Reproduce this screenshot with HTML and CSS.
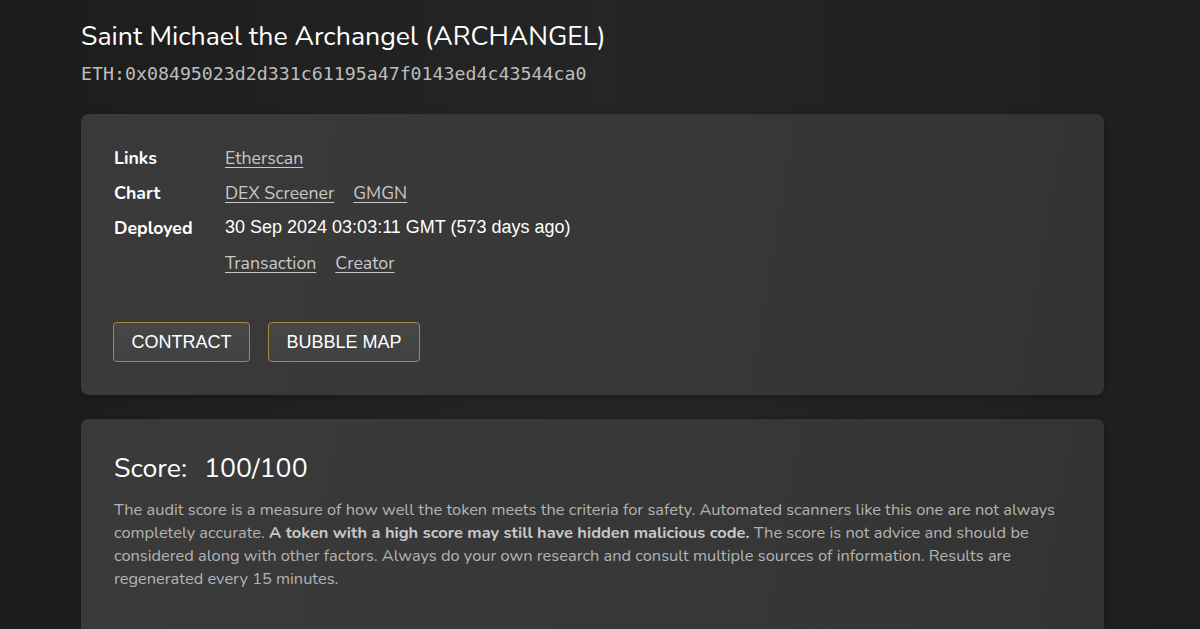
FILE: index.html
```html
<!DOCTYPE html>
<html lang="en">
<head>
<meta charset="utf-8">
<title>Saint Michael the Archangel (ARCHANGEL)</title>
<link rel="stylesheet" href="styles.css">
</head>
<body>
<main class="page">
  <header class="head">
    <h1 class="title">Saint Michael the Archangel (ARCHANGEL)</h1>
    <div class="addr">ETH:0x08495023d2d331c61195a47f0143ed4c43544ca0</div>
  </header>

  <section class="card info">
    <div class="rows">
      <div class="label">Links</div>
      <div class="value"><a href="#">Etherscan</a></div>
      <div class="label">Chart</div>
      <div class="value"><a href="#">DEX Screener</a><a href="#">GMGN</a></div>
      <div class="label">Deployed</div>
      <div class="value plain">30 Sep 2024 03:03:11 GMT (573 days ago)</div>
      <div class="label"></div>
      <div class="value"><a href="#">Transaction</a><a href="#">Creator</a></div>
    </div>
    <div class="buttons">
      <button class="btn">CONTRACT</button>
      <button class="btn">BUBBLE MAP</button>
    </div>
  </section>

  <section class="card score">
    <h2 class="score-title"><span>Score:</span><span>100/100</span></h2>
    <p class="desc">The audit score is a measure of how well the token meets the criteria for safety. Automated scanners like this one are not always completely accurate. <strong>A token with a high score may still have hidden malicious code.</strong> The score is not advice and should be considered along with other factors. Always do your own research and consult multiple sources of information. Results are regenerated every 15 minutes.</p>
  </section>
</main>
</body>
</html>
```

FILE: styles.css
```css
html, body {
  margin: 0;
  padding: 0;
}
body {
  background: linear-gradient(90deg, #1c1c1c 0%, #252525 50%, #1e1e1e 100%);
  color: #fff;
  font-family: "Nunito", "Lato", "Open Sans", sans-serif;
  height: 629px;
  overflow: hidden;
}
.page {
  width: 1023px;
  margin: 0 0 0 81px;
  padding-top: 20px;
}
.head {
  margin-bottom: 29px;
}
.title {
  margin: 0;
  font-weight: 400;
  font-size: 26.7px;
  line-height: 32px;
  color: #fff;
}
.addr {
  margin-top: 11px;
  font-family: "DejaVu Sans Mono", monospace;
  font-size: 18.25px;
  line-height: 22px;
  color: #bdbdbd;
}
.card {
  background: linear-gradient(100deg, #3a3a3a 0%, #373737 60%, #333 100%);
  border-radius: 8px;
  box-shadow: 0 2px 6px rgba(0, 0, 0, 0.25);
  padding: 26px 33px 33px 33px;
}
.info {
  margin-bottom: 24px;
}
.rows {
  display: grid;
  grid-template-columns: 111px 1fr;
  grid-auto-rows: 35px;
  align-items: center;
  font-size: 17.7px;
}
.label {
  font-weight: 700;
  color: #fff;
}
.value {
  display: flex;
  gap: 19px;
}
.value a {
  color: #c8c8c8;
  text-decoration: underline;
  text-underline-offset: 3px;
}
.value.plain {
  font-family: "Liberation Sans", Arial, sans-serif;
  font-size: 18px;
  color: #fff;
}
.buttons {
  display: flex;
  gap: 18px;
  margin-top: 42px;
  margin-left: -1px;
}
.btn {
  font-family: "Liberation Sans", Arial, sans-serif;
  font-size: 18px;
  color: #fff;
  background: linear-gradient(180deg, #474747, #414141);
  border: 1px solid #a58a3e;
  border-radius: 4px;
  height: 40px;
  padding: 0 17.5px;
}
.score {
  padding-top: 33px;
  min-height: 260px;
}
.score-title {
  margin: 0 0 14px;
  font-weight: 400;
  font-size: 26.7px;
  line-height: 32px;
  display: flex;
  gap: 17px;
}
.desc {
  margin: 0;
  max-width: 952px;
  font-size: 16.4px;
  line-height: 23px;
  color: #b4b4b4;
}
.desc strong {
  color: #c8c8c8;
}
```
